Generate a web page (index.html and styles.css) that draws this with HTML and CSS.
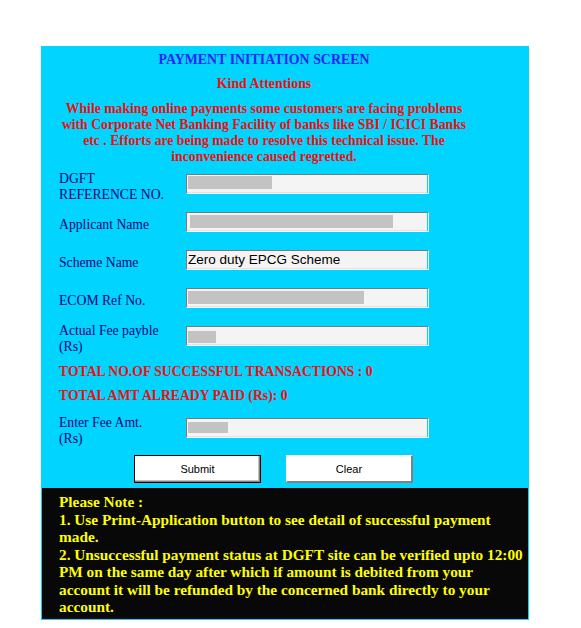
FILE: index.html
```html
<!DOCTYPE html>
<html>
<head>
<meta charset="utf-8">
<title>Payment Initiation Screen</title>
<link rel="stylesheet" href="styles.css">
</head>
<body>
<div class="panel">
  <div class="head">
    <div class="title">PAYMENT INITIATION SCREEN</div>
    <div class="kind">Kind Attentions</div>
    <div class="warn">While making online payments some customers are facing problems with Corporate Net Banking Facility of banks like SBI / ICICI Banks etc . Efforts are being made to resolve this technical issue. The inconvenience caused regretted.</div>
  </div>

  <div class="form">
    <div class="row">
      <div class="label">DGFT<br>REFERENCE NO.</div>
      <div class="field"><span class="redact r-dgft"></span></div>
    </div>
    <div class="row">
      <div class="label">Applicant Name</div>
      <div class="field"><span class="redact r-app"></span></div>
    </div>
    <div class="row">
      <div class="label">Scheme Name</div>
      <div class="field"><span class="value">Zero duty EPCG Scheme</span></div>
    </div>
    <div class="row">
      <div class="label">ECOM Ref No.</div>
      <div class="field"><span class="redact r-ecom"></span></div>
    </div>
    <div class="row">
      <div class="label">Actual Fee payble<br>(Rs)</div>
      <div class="field"><span class="redact r-fee"></span></div>
    </div>
  </div>

  <div class="total first">TOTAL NO.OF SUCCESSFUL TRANSACTIONS : 0</div>
  <div class="total">TOTAL AMT ALREADY PAID (Rs): 0</div>

  <div class="form enter">
    <div class="row">
      <div class="label">Enter Fee Amt.<br>(Rs)</div>
      <div class="field"><span class="redact r-enter"></span></div>
    </div>
  </div>

  <div class="buttons">
    <button class="btn submit">Submit</button>
    <button class="btn clear">Clear</button>
  </div>

  <div class="note">
    Please Note :<br>
    1. Use Print-Application button to see detail of successful payment made.<br>
    2. Unsuccessful payment status at DGFT site can be verified upto 12:00 PM on the same day after which if amount is debited from your account it will be refunded by the concerned bank directly to your account.
  </div>
</div>
</body>
</html>
```
FILE: styles.css
```css
html, body {
  margin: 0;
  padding: 0;
  background: #ffffff;
}

.panel {
  margin: 46px 0 0 41px;
  width: 488px;
  background: #00d4ff;
  padding-top: 6px;
  padding-bottom: 1px;
  font-family: "Liberation Serif", "Times New Roman", serif;
  font-size: 13.7px;
  line-height: 16px;
}

.head {
  margin-left: 18px;
  width: 410px;
  text-align: center;
  font-weight: bold;
}

.title {
  color: #2626f6;
  font-size: 13.9px;
}

.kind {
  margin-top: 8px;
  color: #f01010;
  font-size: 13.9px;
}

.warn {
  margin-top: 9px;
  color: #f01010;
}

.form {
  margin-top: 2px;
  padding-left: 18px;
}

.form.enter {
  margin-top: 7px;
}

.row {
  display: flex;
  align-items: center;
  height: 38px;
}

.label {
  width: 127px;
  padding-top: 2px;
  color: #000080;
}

.field {
  box-sizing: border-box;
  width: 243px;
  height: 20px;
  margin-bottom: 4px;
  background: #f4f4f4;
  border-top: 1px solid #7a7a7a;
  border-left: 1px solid #7a7a7a;
  border-right: 1px solid #ffffff;
  border-bottom: 1px solid #ffffff;
  box-shadow: inset -1px 0 0 #00d4ff, inset 0 -1px 0 #e6e2e2;
  display: flex;
  align-items: flex-start;
}

.redact {
  display: block;
  height: 13px;
  margin-top: 1px;
  margin-left: 1px;
  background: #c3c3c3;
}

.r-dgft { width: 84px; }
.r-app { width: 203px; margin-left: 3px; margin-top: 2px; }
.r-ecom { width: 176px; margin-top: 2px; }
.r-fee { width: 28px; margin-top: 4px; height: 12px; }
.r-enter { width: 40px; margin-top: 3px; height: 11px; }

.value {
  font-family: "Liberation Sans", Arial, sans-serif;
  font-size: 13.5px;
  line-height: 17px;
  color: #000000;
  padding-left: 1px;
}

.total {
  margin-top: 8px;
  padding-left: 18px;
  color: #f01010;
  font-weight: bold;
}

.total.first {
  margin-top: 7px;
}

.buttons {
  display: flex;
  gap: 25px;
  padding-left: 93px;
  margin-top: 6px;
}

.btn {
  box-sizing: border-box;
  width: 127px;
  height: 28px;
  padding: 0;
  background: #ffffff;
  font-family: "Liberation Sans", Arial, sans-serif;
  font-size: 11px;
  color: #000000;
}

.submit {
  border: 1px solid #000000;
  box-shadow: inset -1px -1px 0 #808080, inset -2px -2px 0 #c0c0c0;
}

.clear {
  border-top: 1px solid #ffffff;
  border-left: 1px solid #ffffff;
  border-right: 2px solid #808080;
  border-bottom: 2px solid #808080;
}

.note {
  margin: 5px 1px 0 1px;
  padding: 5px 2px 3px 17px;
  background: #080808;
  color: #ffff00;
  font-weight: bold;
  font-size: 15.3px;
  line-height: 17.5px;
}
```
